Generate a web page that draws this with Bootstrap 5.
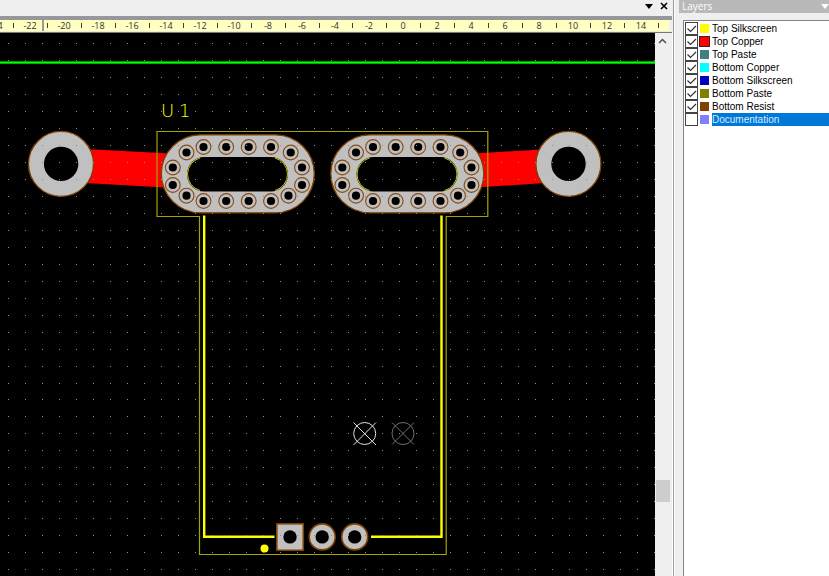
<!DOCTYPE html>
<html lang="en">
<head>
<meta charset="utf-8">
<meta name="viewport" content="width=device-width, initial-scale=1">
<title>PCB layout</title>
<link href="https://cdn.jsdelivr.net/npm/bootstrap@5.3.0/dist/css/bootstrap.min.css" rel="stylesheet">
<style>
body{background:#efefef;font-family:"Open Sans","Noto Sans",sans-serif;font-size:10px;line-height:13px;color:#000}
.tool-btn{border:0;background:none;padding:0;width:15px;height:12px;line-height:0;display:flex;align-items:center;justify-content:center}
.doc-bar{height:16px;padding-right:2px}
.doc-pane{border-right:1px solid #9c9ca2}
.ruler-box{height:17px;border-top:4px solid #98989c;border-bottom:1px solid #77777a;margin-right:1px;background:#ececdc}
.ruler{display:block;width:100%;height:11px;background:#ffffc0;border-right:3px solid #efefef}
.ruler text{font-size:9px;fill:#303030;text-anchor:middle}
.board{background:#000}
.scroll-v{width:18px;background:#efefef;border-right:1px solid #fff}
.scroll-thumb{height:22px;background:#cdcdcd;margin:0 2px 0 1px}
.track-before{flex:430 1 0}
.track-after{flex:74 1 0}
.divider{width:5px;border-left:1px solid #fafafa}
.side{width:150px}
.side-title{height:13px;background:#b9b9b9;color:#fff;line-height:12px;padding-left:3px}
.layer-box{margin:7px 0 0 4px;border-left:1px solid #82858c;border-top:1px solid #82858c;background:#fff;padding:1px 0 0 1px;font-family:"Liberation Sans",Arial,sans-serif}
.layer-line{height:13px}
.layer-line .form-check-input{width:13px;height:13px;margin:0;border:1px solid #444;border-radius:0;background-color:#fff;background-size:11px 11px;flex:none;box-shadow:none}
.layer-line .form-check-input:checked{background-color:#fff;background-image:url("data:image/svg+xml,%3csvg xmlns='http://www.w3.org/2000/svg' viewBox='0 0 11 11'%3e%3cpath fill='none' stroke='%23333' stroke-width='1.2' d='M1.500 5.500l3 3L10 3'/%3e%3c/svg%3e")}
.swatch{width:11px;height:11px;margin:0 2px 0 1px;border:1px solid #fff;flex:none}
.swatch.current{border-color:#402020}
.layer-name{line-height:13px;white-space:nowrap}
.layer-name.chosen{background:#0078d7;color:#d8ecff}
.c1{background:#ff0}.c2{background:red}.c3{background:#408080}.c4{background:#0ff}
.c5{background:#0000c0}.c6{background:#808000}.c7{background:#804000}.c8{background:#8080ff}
</style>
</head>
<body>
<div class="d-flex vh-100 overflow-hidden">
  <main class="doc-pane d-flex flex-column flex-grow-1 overflow-hidden">
    <div class="doc-bar d-flex justify-content-end">
      <button class="tool-btn" type="button" aria-label="Window list"><svg width="8" height="5"><path d="M0 0H8L4 5Z"/></svg></button>
      <button class="tool-btn" type="button" aria-label="Close"><svg width="8" height="8"><path d="M1 1L7 7M7 1L1 7" stroke="#000" stroke-width="1.600"/></svg></button>
    </div>
    <div class="ruler-box"><svg class="ruler" id="ruler" role="img" aria-label="Horizontal ruler"></svg></div>
    <div class="d-flex flex-grow-1 overflow-hidden">
      <div class="board flex-grow-1 overflow-hidden">
        <svg class="d-block w-100 h-100" role="img" aria-label="Circuit board">
          <defs>
            <g id="via"><circle r="7.400" fill="none" stroke="#8a4a10" stroke-width="1.100"/><circle r="4.100" fill="#000"/></g>
            <g id="slot">
              <rect x="161.300" y="134.800" width="153" height="78" rx="39" fill="#c0c0c0" stroke="#804000" stroke-width="1.300"/>
              <rect x="187" y="157" width="101" height="34.500" rx="17.200"/>
              <path d="M200 158A17 17 0 0 0 187.500 174A17 17 0 0 0 200 190.500M275 158A17 17 0 0 1 287.500 174A17 17 0 0 1 275 190.500" fill="none" stroke="#dd0" stroke-width="0.900"/>
              <use href="#via" x="186.500" y="152.500"/><use href="#via" x="203.500" y="147"/><use href="#via" x="226.200" y="147"/><use href="#via" x="248.700" y="147"/><use href="#via" x="271" y="147"/><use href="#via" x="290.700" y="152.500"/><use href="#via" x="302" y="167.500"/><use href="#via" x="302" y="185"/><use href="#via" x="288.500" y="195.700"/><use href="#via" x="271" y="201"/><use href="#via" x="248.700" y="201"/><use href="#via" x="226.200" y="201"/><use href="#via" x="203.500" y="201"/><use href="#via" x="186.500" y="195.700"/><use href="#via" x="172.800" y="185"/><use href="#via" x="172.800" y="167.500"/>
            </g>
          </defs>
          <g transform="translate(0 -33)">
            <rect y="61.400" width="100%" height="2.300" fill="#0f0"/>
            <path d="M80 148.800L170 153.600V187.700L80 182.800ZM475 153.500L545 149.200V183L475 187.500Z" fill="red"/>
            <g fill="#c0c0c0" stroke="#804000" stroke-width="1.300"><circle cx="61" cy="163.900" r="32.500"/><circle cx="568.400" cy="163.900" r="32.500"/></g>
            <circle cx="61.100" cy="163.900" r="17.200"/><circle cx="568.500" cy="163.900" r="17.200"/>
            <use href="#slot"/><use href="#slot" x="169.500"/>
            <path d="M157 131.500H487.800V216.500H446.200V554.500H199.500V216.500H157Z" fill="none" stroke="#a6a600" stroke-width="1.200"/>
            <path d="M204.200 215.500V536.800H274.500M441.500 215.500V536.800H371" fill="none" stroke="#ff0" stroke-width="2.400"/>
            <circle cx="264.500" cy="548.600" r="4" fill="#ff0"/>
            <g fill="#c0c0c0" stroke="#804000" stroke-width="1.600"><rect x="276.800" y="523.800" width="26.500" height="26.500"/><circle cx="322.200" cy="536.900" r="13"/><circle cx="354.700" cy="536.900" r="13"/></g>
            <circle cx="290" cy="536.900" r="6.700"/><circle cx="322.200" cy="536.900" r="6.700"/><circle cx="354.700" cy="536.900" r="6.700"/>
            <g fill="none"><path d="M375.700 433.500A11 11 0 1 0 353.700 433.500A11 11 0 1 0 375.700 433.500M353.500 422.500L376 445M376 422.500L353.500 445" stroke="#e0e0e0"/><path d="M414 433.500A11 11 0 1 0 392 433.500A11 11 0 1 0 414 433.500M392 422.500L414 444.500M414 422.500L392 444.500" stroke="#707070"/></g>
            <text x="161 179" y="117" fill="#ff0" font-family="DejaVu Sans, DejaVu Sans Light, sans-serif" font-weight="200" font-size="18">U1</text>
            <path id="dots" stroke="#8c8c8c" fill="none"/>
          </g>
        </svg>
      </div>
      <div class="scroll-v d-flex flex-column">
        <button class="tool-btn py-2" type="button" aria-label="Scroll up"><svg width="9" height="6"><path d="M1 5L4.500 1.500L8 5" fill="none" stroke="#505050" stroke-width="1.500"/></svg></button>
        <div class="track-before"></div>
        <div class="scroll-thumb"></div>
        <div class="track-after"></div>
      </div>
    </div>
  </main>
  <div class="divider flex-shrink-0"></div>
  <aside class="side d-flex flex-column flex-shrink-0 overflow-hidden">
    <div class="side-title d-flex justify-content-between"><span>Layers</span><button class="tool-btn justify-content-end" type="button" aria-label="Panel menu"><svg width="8" height="5"><path d="M0 0H8L4 5Z" fill="#fff"/></svg></button></div>
    <div class="layer-box flex-grow-1">
      <div class="layer-line d-flex align-items-center"><input class="form-check-input" type="checkbox" id="l1" checked><span class="swatch c1"></span><label class="layer-name flex-grow-1" for="l1">Top Silkscreen</label></div>
      <div class="layer-line d-flex align-items-center"><input class="form-check-input" type="checkbox" id="l2" checked><span class="swatch current c2"></span><label class="layer-name flex-grow-1" for="l2">Top Copper</label></div>
      <div class="layer-line d-flex align-items-center"><input class="form-check-input" type="checkbox" id="l3" checked><span class="swatch c3"></span><label class="layer-name flex-grow-1" for="l3">Top Paste</label></div>
      <div class="layer-line d-flex align-items-center"><input class="form-check-input" type="checkbox" id="l4" checked><span class="swatch c4"></span><label class="layer-name flex-grow-1" for="l4">Bottom Copper</label></div>
      <div class="layer-line d-flex align-items-center"><input class="form-check-input" type="checkbox" id="l5" checked><span class="swatch c5"></span><label class="layer-name flex-grow-1" for="l5">Bottom Silkscreen</label></div>
      <div class="layer-line d-flex align-items-center"><input class="form-check-input" type="checkbox" id="l6" checked><span class="swatch c6"></span><label class="layer-name flex-grow-1" for="l6">Bottom Paste</label></div>
      <div class="layer-line d-flex align-items-center"><input class="form-check-input" type="checkbox" id="l7" checked><span class="swatch c7"></span><label class="layer-name flex-grow-1" for="l7">Bottom Resist</label></div>
      <div class="layer-line d-flex align-items-center"><input class="form-check-input" type="checkbox" id="l8"><span class="swatch c8"></span><label class="layer-name chosen flex-grow-1" for="l8">Documentation</label></div>
    </div>
  </aside>
</div>
<script src="https://cdn.jsdelivr.net/npm/bootstrap@5.3.0/dist/js/bootstrap.bundle.min.js"></script>
<script>
// Grid dots every board unit
let d = '';
for (let y = 0; y < 90; y++)
  for (let x = 0; x < 150; x++)
    d += `M${Math.floor(8.8 + x * 16.98)} ${Math.floor(43.6 + y * 16.97)}.5h1`;
document.getElementById('dots').setAttribute('d', d);
// Ruler: a number every two units, a tick between
let r = '<rect x="42" width="2" height="11" fill="#999"/>';
for (let n = -24; n <= 14; n += 2) {
  const x = Math.round(403.3 + n * 16.96);
  r += `<text x="${x}" y="9">${n}</text><rect x="${x + 17}" y="3" width="1" height="5" fill="#404040"/>`;
}
document.getElementById('ruler').innerHTML = r;
</script>
</body>
</html>
